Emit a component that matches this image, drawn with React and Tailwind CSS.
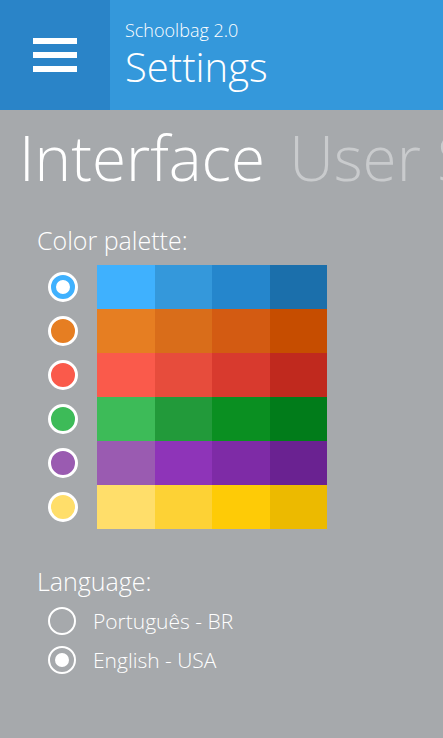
import React, { useState } from "react";

const palettes = [
  { dot: "bg-[#3fb1fe]", cells: ["bg-[#3fb1fe]", "bg-[#3498db]", "bg-[#2586cc]", "bg-[#1b6fab]"] },
  { dot: "bg-[#e67e22]", cells: ["bg-[#e67e22]", "bg-[#d96d1a]", "bg-[#d35b12]", "bg-[#c64d00]"] },
  { dot: "bg-[#fa5a4b]", cells: ["bg-[#fa5a4b]", "bg-[#e74c3c]", "bg-[#d83a2e]", "bg-[#c0291e]"] },
  { dot: "bg-[#3dbb58]", cells: ["bg-[#3dbb58]", "bg-[#229a3a]", "bg-[#0a8f21]", "bg-[#017c1a]"] },
  { dot: "bg-[#9a5bb1]", cells: ["bg-[#9a5bb1]", "bg-[#8e34b8]", "bg-[#7e2ba6]", "bg-[#6a2291]"] },
  { dot: "bg-[#ffde6a]", cells: ["bg-[#ffde6a]", "bg-[#fdd235]", "bg-[#fecb06]", "bg-[#ecba00]"] },
];

const languages = ["Português - BR", "English - USA"];

const App = () => {
  const [palette, setPalette] = useState(0);
  const [lang, setLang] = useState(1);

  return (
    <div className="w-[443px] h-[738px] overflow-hidden bg-[#a6a9ac] font-['Open_Sans',sans-serif] font-light text-white">
      <div className="flex h-[110px] bg-[#3498db]">
        <button className="w-[110px] h-[110px] bg-[#2a84c8] flex flex-col justify-center items-center gap-[8px]">
          <span className="block w-[44px] h-[6px] bg-white" />
          <span className="block w-[44px] h-[6px] bg-white" />
          <span className="block w-[44px] h-[6px] bg-white" />
        </button>
        <div className="pl-[15px] pt-[18px]">
          <div className="text-[18px] leading-[24px]">Schoolbag 2.0</div>
          <div className="text-[40px] leading-[48px] mt-[1px]">Settings</div>
        </div>
      </div>

      <div className="whitespace-nowrap pl-[19px] pt-[12px] text-[62px] leading-[70px]">
        <span>Interface</span>
        <span className="ml-[24px] text-[#c9cbcd]">User Settings</span>
      </div>

      <div className="pl-[37px] pt-[32px] text-[25px] leading-[32px]">Color palette:</div>

      <div className="flex pl-[48px] pt-[9px]">
        <div className="flex flex-col">
          {palettes.map((p, i) => (
            <button
              key={i}
              onClick={() => setPalette(i)}
              className="h-[44px] flex items-center"
            >
              <span
                className={
                  "w-[30px] h-[30px] rounded-full border-[3px] border-white " +
                  (palette === i ? "bg-white flex items-center justify-center" : p.dot)
                }
              >
                {palette === i && (
                  <span className="block w-[24px] h-[24px] rounded-full border-[5px] border-[#3fb1fe] bg-white" />
                )}
              </span>
            </button>
          ))}
        </div>
        <div className="ml-[19px] grid grid-cols-4 w-[230px]">
          {palettes.map((p, i) =>
            p.cells.map((c, j) => <div key={i + "-" + j} className={"h-[44px] " + c} />)
          )}
        </div>
      </div>

      <div className="pl-[37px] pt-[36px] text-[25px] leading-[32px]">Language:</div>
      <div className="pl-[48px] pt-[8px] flex flex-col gap-[8px]">
        {languages.map((l, i) => (
          <button key={i} onClick={() => setLang(i)} className="flex items-center h-[31px]">
            <span className="w-[28px] h-[28px] rounded-full border-[2.5px] border-white flex items-center justify-center">
              {lang === i && <span className="block w-[14px] h-[14px] rounded-full bg-white" />}
            </span>
            <span className="ml-[17px] text-[21px] leading-[28px]">{l}</span>
          </button>
        ))}
      </div>
    </div>
  );
};

export default App;
